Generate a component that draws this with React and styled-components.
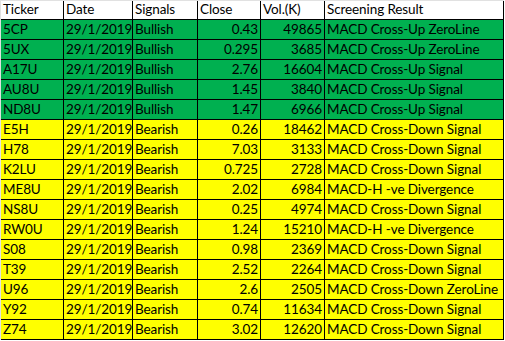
import React from "react";
import styled, { createGlobalStyle } from "styled-components";

const Global = createGlobalStyle`
  html, body { margin: 0; padding: 0; background: #ffffff; }
  body { font-family: Lato, "Liberation Sans", sans-serif; }
`;

const Sheet = styled.div`
  display: grid;
  grid-template-columns: 63px 69px 65px 63px 64px 179px;
  grid-template-rows: 19px repeat(16, 20px);
  width: max-content;
  border-top: 1px solid #e1e1e1;
  border-left: 1px solid #e1e1e1;
`;

const Cell = styled.div`
  box-sizing: border-box;
  display: flex;
  align-items: flex-end;
  justify-content: ${(p) => (p.$align === "right" ? "flex-end" : "flex-start")};
  padding: 0 2px 2px 2px;
  border-right: 1px solid #000;
  border-bottom: 1px solid #000;
  background: ${(p) =>
    p.$tone === "bull" ? "#00b050" : p.$tone === "bear" ? "#ffff00" : "#ffffff"};
  color: #000;
  font-size: 13.5px;
  letter-spacing: -0.1px;
  line-height: 16px;
  white-space: nowrap;
  overflow: visible;
`;

const headers = ["Ticker", "Date", "Signals", "Close", "Vol.(K)", "Screening Result"];

const rows = [
  ["5CP", "Bullish", "0.43", "49865", "MACD Cross-Up ZeroLine"],
  ["5UX", "Bullish", "0.295", "3685", "MACD Cross-Up ZeroLine"],
  ["A17U", "Bullish", "2.76", "16604", "MACD Cross-Up Signal"],
  ["AU8U", "Bullish", "1.45", "3840", "MACD Cross-Up Signal"],
  ["ND8U", "Bullish", "1.47", "6966", "MACD Cross-Up Signal"],
  ["E5H", "Bearish", "0.26", "18462", "MACD Cross-Down Signal"],
  ["H78", "Bearish", "7.03", "3133", "MACD Cross-Down Signal"],
  ["K2LU", "Bearish", "0.725", "2728", "MACD Cross-Down Signal"],
  ["ME8U", "Bearish", "2.02", "6984", "MACD-H -ve Divergence"],
  ["NS8U", "Bearish", "0.25", "4974", "MACD Cross-Down Signal"],
  ["RW0U", "Bearish", "1.24", "15210", "MACD-H -ve Divergence"],
  ["S08", "Bearish", "0.98", "2369", "MACD Cross-Down Signal"],
  ["T39", "Bearish", "2.52", "2264", "MACD Cross-Down Signal"],
  ["U96", "Bearish", "2.6", "2505", "MACD Cross-Down ZeroLine"],
  ["Y92", "Bearish", "0.74", "11634", "MACD Cross-Down Signal"],
  ["Z74", "Bearish", "3.02", "12620", "MACD Cross-Down Signal"],
];

export default function App() {
  return (
    <>
      <Global />
      <Sheet>
        {headers.map((h) => (
          <Cell key={h}>{h}</Cell>
        ))}
        {rows.map(([ticker, signal, close, vol, result]) => {
          const tone = signal === "Bullish" ? "bull" : "bear";
          return (
            <React.Fragment key={ticker}>
              <Cell $tone={tone}>{ticker}</Cell>
              <Cell $tone={tone}>29/1/2019</Cell>
              <Cell $tone={tone}>{signal}</Cell>
              <Cell $tone={tone} $align="right">{close}</Cell>
              <Cell $tone={tone} $align="right">{vol}</Cell>
              <Cell $tone={tone}>{result}</Cell>
            </React.Fragment>
          );
        })}
      </Sheet>
    </>
  );
}
